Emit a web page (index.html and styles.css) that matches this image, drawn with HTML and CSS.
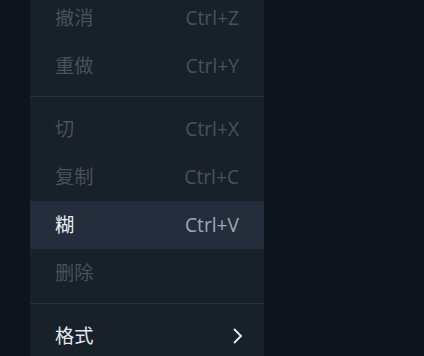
FILE: index.html
```html
<!DOCTYPE html>
<html lang="zh">
	<head>
		<meta charset="UTF-8" />
		<meta name="viewport" content="width=device-width, initial-scale=1.0" />
		<title>编辑菜单</title>
		<link rel="stylesheet" href="styles.css">
	</head>
	<body>
		<div class="menu">
			<div class="menu-item disabled">
				<span class="label">撤消</span>
				<span class="shortcut">Ctrl+Z</span>
			</div>
			<div class="menu-item disabled">
				<span class="label">重做</span>
				<span class="shortcut">Ctrl+Y</span>
			</div>

			<div class="separator"></div>

			<div class="menu-item disabled">
				<span class="label">切</span>
				<span class="shortcut">Ctrl+X</span>
			</div>
			<div class="menu-item disabled">
				<span class="label">复制</span>
				<span class="shortcut">Ctrl+C</span>
			</div>
			<div class="menu-item active">
				<span class="label">糊</span>
				<span class="shortcut">Ctrl+V</span>
			</div>
			<div class="menu-item disabled">
				<span class="label">删除</span>
			</div>

			<div class="separator"></div>

			<!-- Submenu -->
			<div class="menu-item">
				<span class="label">格式</span>
				<svg class="chevron" width="12" height="18" viewBox="0 0 12 18">
					<polyline points="3,2 10,9 3,16" fill="none" stroke="currentColor" stroke-width="2" />
				</svg>
			</div>
		</div>
	</body>
</html>
```

FILE: styles.css
```css
body {
	margin: 0;
	background-color: #0e141e;
	font-family: 'Open Sans', 'Noto Sans CJK SC', sans-serif;
	font-size: 19.2px;
	overflow: hidden;
}

.menu {
	width: 234px;
	margin: -6px 0 0 30px;
	background-color: #18202a;
}

.menu-item {
	display: flex;
	align-items: center;
	justify-content: space-between;
	height: 48px;
	padding: 0 25px;
	color: #e2e8ee;
	line-height: 1.5;
}

.menu-item.disabled {
	color: #47525e;
}

.menu-item.active {
	background-color: #232d3b;
	color: #eef2f6;
}

.menu-item.active .shortcut {
	color: #9aa8b6;
}

.chevron {
	margin-right: -4px;
	color: #dfe5eb;
}

.separator {
	height: 1px;
	margin: 6px 0 8px;
	background-color: #262f3a;
}
```
